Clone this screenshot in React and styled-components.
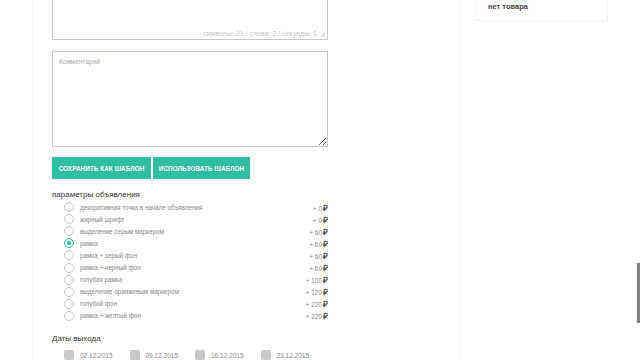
import React from "react";
import styled, { createGlobalStyle } from "styled-components";

const Global = createGlobalStyle`
  html, body { margin: 0; padding: 0; background: #fff; }
  body { font-family: "Liberation Sans", Arial, sans-serif; color: #333; overflow: hidden; }
  * { box-sizing: border-box; }
`;

const Page = styled.div`
  width: 640px;
  height: 360px;
  display: flex;
  overflow: hidden;
  position: relative;
`;

const Gutter = styled.div`
  width: 32px;
  flex: none;
`;

const Main = styled.div`
  width: 429px;
  flex: none;
  border-left: 1px solid #f2f2f2;
  border-right: 1px solid #f2f2f2;
  padding-left: 19px;
  display: flex;
  flex-direction: column;
`;

const Side = styled.div`
  flex: 1;
  padding-left: 14px;
`;

const Card = styled.div`
  width: 133px;
  height: 21px;
  border: 1px solid #f0f0f0;
  border-top: none;
  padding: 2px 0 0 12px;
  font-size: 7.5px;
  font-weight: bold;
  color: #444;
`;

const TextBox = styled.div`
  width: 276px;
  height: 41px;
  border: 1px solid #c9c9c9;
  border-top: none;
  position: relative;
  display: flex;
  align-items: flex-end;
  justify-content: flex-end;
  padding: 0 10px 2px 0;
`;

const Counter = styled.span`
  font-size: 7px;
  color: #c4c4c4;
`;

const Grip = styled.svg`
  position: absolute;
  right: 1px;
  bottom: 1px;
`;

const Comment = styled.textarea`
  width: 276px;
  height: 97px;
  margin-top: 11px;
  border: 1px solid #c9c9c9;
  border-radius: 0;
  padding: 6px 6px;
  font-family: "Liberation Sans", Arial, sans-serif;
  font-size: 6.5px;
  resize: vertical;
  outline: none;
  &::placeholder { color: #aaa; }
`;

const Buttons = styled.div`
  display: flex;
  gap: 2px;
  margin-top: 10px;
`;

const Button = styled.button`
  height: 22px;
  width: ${p => p.$w}px;
  border: none;
  border-radius: 0;
  background: #30bea3;
  color: #fff;
  font-family: "Liberation Sans", Arial, sans-serif;
  font-weight: bold;
  font-size: 6.3px;
  text-transform: uppercase;
  padding: 0;
  letter-spacing: 0.1px;
`;

const SectionTitle = styled.div`
  font-size: 8px;
  color: #333;
  margin-top: ${p => p.$mt}px;
  height: 10px;
  line-height: 10px;
`;

const Options = styled.div`
  width: 276px;
  display: flex;
  flex-direction: column;
  margin-top: 1px;
`;

const Row = styled.div`
  height: 12.1px;
  display: flex;
  align-items: center;
  padding-left: 12px;
`;

const Radio = styled.span`
  width: 10px;
  height: 10px;
  border-radius: 50%;
  border: 1.5px solid ${p => (p.$on ? "#30bea3" : "#c8c8c8")};
  display: flex;
  align-items: center;
  justify-content: center;
  flex: none;
  &::after {
    content: "";
    width: 4px;
    height: 4px;
    border-radius: 50%;
    background: ${p => (p.$on ? "#30bea3" : "transparent")};
  }
`;

const Label = styled.span`
  font-size: 6.3px;
  color: #888;
  margin-left: 6px;
  flex: 1;
`;

const Price = styled.span`
  font-size: 6.5px;
  color: #888;
  display: flex;
  align-items: baseline;
  gap: 1px;
`;

const Rub = styled.span`
  font-size: 8.5px;
  font-weight: bold;
  color: #555;
`;

const Dates = styled.div`
  display: grid;
  grid-template-columns: repeat(4, 65.5px);
  margin-top: 6px;
  padding-left: 12px;
`;

const DateItem = styled.div`
  display: flex;
  align-items: center;
  gap: 6px;
  height: 10px;
`;

const Box = styled.span`
  width: 10px;
  height: 10px;
  border-radius: 2px;
  background: #c9c9cc;
  flex: none;
`;

const DateText = styled.span`
  font-size: 6.5px;
  color: #888;
`;

const Scroll = styled.div`
  position: absolute;
  right: 0;
  top: 263px;
  width: 3px;
  height: 60px;
  background: #808080;
  box-shadow: -1px 0 1px #eee;
`;

const options = [
  ["декоративная точка в начале объявления", 0],
  ["жирный шрифт", 0],
  ["выделение серым маркером", 60],
  ["рамка", 60, true],
  ["рамка + серый фон", 60],
  ["рамка + черный фон", 60],
  ["голубая рамка", 100],
  ["выделение оранжевым маркером", 120],
  ["голубой фон", 220],
  ["рамка + желтый фон", 220],
];

const dates = ["02.12.2015", "09.12.2015", "16.12.2015", "23.12.2015"];

export default function App() {
  return (
    <Page>
      <Global />
      <Gutter />
      <Main>
        <TextBox>
          <Counter>символы: 21 / слова: 2 / секунды: 1</Counter>
          <Grip width="6" height="6" viewBox="0 0 6 6">
            <path d="M5 1 L1 5 M5 3.5 L3.5 5" stroke="#aaa" strokeWidth="0.8" />
          </Grip>
        </TextBox>
        <Comment placeholder="Комментарий" />
        <Buttons>
          <Button $w={99}>Сохранить как шаблон</Button>
          <Button $w={97}>Использовать шаблон</Button>
        </Buttons>
        <SectionTitle $mt={11}>параметры объявления</SectionTitle>
        <Options>
          {options.map(([t, p, on]) => (
            <Row key={t}>
              <Radio $on={on} />
              <Label>{t}</Label>
              <Price>
                + {p}
                <Rub>₽</Rub>
              </Price>
            </Row>
          ))}
        </Options>
        <SectionTitle $mt={12}>Даты выхода</SectionTitle>
        <Dates>
          {dates.map(d => (
            <DateItem key={d}>
              <Box />
              <DateText>{d}</DateText>
            </DateItem>
          ))}
        </Dates>
      </Main>
      <Side>
        <Card>нет товара</Card>
      </Side>
      <Scroll />
    </Page>
  );
}
